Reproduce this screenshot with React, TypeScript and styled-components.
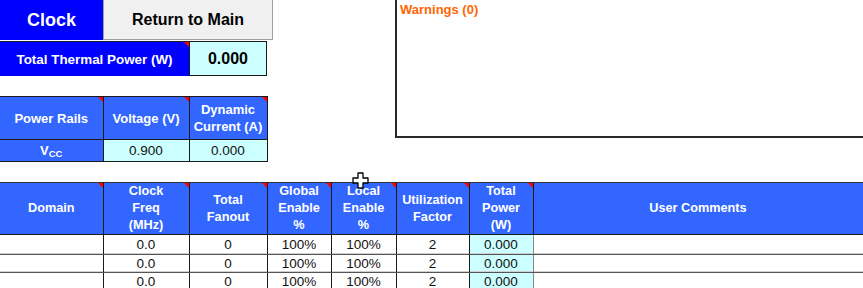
import React from "react";
import styled, {createGlobalStyle, css} from "styled-components";

const GlobalStyle = createGlobalStyle`
    html, body {
        margin: 0;
        padding: 0;
        background: #ffffff;
        overflow: hidden;
    }
    body {
        font-family: "Liberation Sans", Arial, sans-serif;
        width: 863px;
        height: 288px;
    }
`

const mainColumns = [103, 86, 78, 64, 65, 73, 64, 330]

const clockRows = [
    {freq: "0.0", fanout: "0", global: "100%", local: "100%", util: "2", power: "0.000"},
    {freq: "0.0", fanout: "0", global: "100%", local: "100%", util: "2", power: "0.000"},
    {freq: "0.0", fanout: "0", global: "100%", local: "100%", util: "2", power: "0.000"},
]

const App: React.FunctionComponent = () => {
    return (
        <Page>
            <GlobalStyle/>
            <TopSection>
                <LeftPanel>
                    <ButtonRow>
                        <SheetTitle>Clock</SheetTitle>
                        <ReturnButton>Return to Main</ReturnButton>
                    </ButtonRow>
                    <ThermalRow>
                        <ThermalLabel>Total Thermal Power (W)</ThermalLabel>
                        <ThermalValue>0.000</ThermalValue>
                    </ThermalRow>
                    <RailsTable>
                        <colgroup>
                            <col style={{width: 103}}/>
                            <col style={{width: 86}}/>
                            <col style={{width: 78}}/>
                        </colgroup>
                        <thead>
                            <tr>
                                <HeadCell $note>Power Rails</HeadCell>
                                <HeadCell $note>Voltage (V)</HeadCell>
                                <HeadCell $note>Dynamic<br/>Current (A)</HeadCell>
                            </tr>
                        </thead>
                        <tbody>
                            <tr>
                                <RailName>V<sub>CC</sub></RailName>
                                <RailValue>0.900</RailValue>
                                <RailValue>0.000</RailValue>
                            </tr>
                        </tbody>
                    </RailsTable>
                </LeftPanel>
                <WarningsBox>
                    <WarningsTitle>Warnings (0)</WarningsTitle>
                </WarningsBox>
            </TopSection>

            <ClockTable>
                <colgroup>
                    {mainColumns.map((w, i) => <col key={i} style={{width: w}}/>)}
                </colgroup>
                <thead>
                    <tr>
                        <MainHead $note>Domain</MainHead>
                        <MainHead $note>Clock<br/>Freq<br/>(MHz)</MainHead>
                        <MainHead $note>Total<br/>Fanout</MainHead>
                        <MainHead $note>Global<br/>Enable<br/>%</MainHead>
                        <MainHead $note>Local<br/>Enable<br/>%</MainHead>
                        <MainHead $note>Utilization<br/>Factor</MainHead>
                        <MainHead $note>Total<br/>Power<br/>(W)</MainHead>
                        <MainHead>User Comments</MainHead>
                    </tr>
                </thead>
                <tbody>
                    {clockRows.map((row, i) => (
                        <BodyRow key={i} $first={i === 0}>
                            <DataCell/>
                            <DataCell>{row.freq}</DataCell>
                            <DataCell>{row.fanout}</DataCell>
                            <DataCell>{row.global}</DataCell>
                            <DataCell>{row.local}</DataCell>
                            <DataCell>{row.util}</DataCell>
                            <DataCell $calc>{row.power}</DataCell>
                            <DataCell/>
                        </BodyRow>
                    ))}
                </tbody>
            </ClockTable>

            <MoveCursor width="17" height="17" viewBox="0 0 17 17">
                <path
                    d="M6 1h5v5h5v5h-5v5H6v-5H1V6h5z"
                    fill="#ffffff"
                    stroke="#000000"
                    strokeWidth="1.3"
                    strokeLinejoin="round"
                />
            </MoveCursor>
        </Page>
    )
}

export default App

const noteCorner = css`
    &::after {
        content: "";
        position: absolute;
        top: 0;
        right: 0;
        border-top: 5px solid #ff0000;
        border-left: 5px solid transparent;
    }
`

const Page = styled.div`
    position: relative;
    display: flex;
    flex-direction: column;
    width: 863px;
    height: 288px;
    overflow: hidden;
`

const TopSection = styled.div`
    display: flex;
    flex-direction: row;
    align-items: flex-start;
    flex-shrink: 0;
`

const LeftPanel = styled.div`
    display: flex;
    flex-direction: column;
    width: 395px;
    flex-shrink: 0;
`

const ButtonRow = styled.div`
    display: flex;
    flex-direction: row;
    height: 40px;
    flex-shrink: 0;
`

const SheetTitle = styled.div`
    width: 103px;
    background: #0000ff;
    color: #ffffff;
    font-size: 18px;
    font-weight: bold;
    display: flex;
    align-items: center;
    justify-content: center;
`

const ReturnButton = styled.button`
    width: 170px;
    height: 40px;
    margin: 0;
    padding: 0;
    background: #f0f0f0;
    border: 1px solid #a0a0a0;
    border-top: none;
    color: #000000;
    font-family: "Liberation Sans", Arial, sans-serif;
    font-size: 16px;
    font-weight: bold;
    cursor: pointer;
`

const ThermalRow = styled.div`
    display: flex;
    flex-direction: row;
    height: 35px;
    margin-top: 1px;
    flex-shrink: 0;
`

const ThermalLabel = styled.div`
    position: relative;
    width: 189px;
    background: #0000ff;
    color: #ffffff;
    font-size: 13.4px;
    font-weight: bold;
    display: flex;
    align-items: center;
    justify-content: center;
    border-top: 1px solid #1a1a1a;
    box-sizing: border-box;
    ${noteCorner}
`

const ThermalValue = styled.div`
    width: 78px;
    background: #ccffff;
    border: 1px solid #1a1a1a;
    box-sizing: border-box;
    font-size: 16px;
    font-weight: bold;
    display: flex;
    align-items: center;
    justify-content: center;
`

const RailsTable = styled.table`
    margin-top: 20px;
    width: 267px;
    border-collapse: collapse;
    table-layout: fixed;
    flex-shrink: 0;
`

const HeadCell = styled.th<{ $note?: boolean }>`
    position: relative;
    height: 42px;
    padding: 0;
    background: #3366ff;
    color: #ffffff;
    font-size: 13px;
    font-weight: bold;
    line-height: 17px;
    text-align: center;
    border-top: 1px solid #1a1a1a;
    border-right: 1px solid #1a1a1a;
    border-bottom: 1px solid #1a1a1a;
    ${({ $note }) => $note && noteCorner}
`

const RailName = styled.td`
    height: 21px;
    padding: 0;
    background: #3366ff;
    color: #ffffff;
    font-size: 13px;
    font-weight: bold;
    text-align: center;
    border-right: 1px solid #1a1a1a;
    border-bottom: 1px solid #1a1a1a;
    sub {
        font-size: 9.5px;
        vertical-align: -2px;
    }
`

const RailValue = styled.td`
    height: 21px;
    padding: 0;
    background: #ccffff;
    color: #111111;
    font-size: 13.5px;
    text-align: center;
    border-right: 1px solid #1a1a1a;
    border-bottom: 1px solid #1a1a1a;
`

const WarningsBox = styled.div`
    flex: 1;
    height: 138px;
    border-left: 2px solid #2a2a2a;
    border-bottom: 2px solid #2a2a2a;
    box-sizing: border-box;
    padding: 2px 3px;
`

const WarningsTitle = styled.div`
    color: #ff6600;
    font-size: 13px;
    font-weight: bold;
`

const ClockTable = styled.table`
    margin-top: 20px;
    width: 863px;
    border-collapse: collapse;
    table-layout: fixed;
    flex-shrink: 0;
`

const MainHead = styled.th<{ $note?: boolean }>`
    position: relative;
    height: 47px;
    padding: 0;
    background: #3366ff;
    color: #ffffff;
    font-size: 12.7px;
    font-weight: bold;
    line-height: 17px;
    text-align: center;
    border-top: 1px solid #333333;
    border-right: 1px solid #1a1a1a;
    border-bottom: 1px solid #1a1a1a;
    ${({ $note }) => $note && noteCorner}
`

const BodyRow = styled.tr<{ $first?: boolean }>`
    height: ${({ $first }) => ($first ? 20 : 18)}px;
`

const DataCell = styled.td<{ $calc?: boolean }>`
    padding: 0;
    background: ${({ $calc }) => ($calc ? "#ccffff" : "#ffffff")};
    color: #111111;
    font-size: 13.5px;
    text-align: center;
    border-right: 1px solid ${({ $calc }) => ($calc ? "#888888" : "#1a1a1a")};
    border-bottom: 1px solid #555555;
    box-shadow: inset 0 -1px 0 #cfcfcf;
`

const MoveCursor = styled.svg`
    position: absolute;
    left: 352px;
    top: 172px;
`
